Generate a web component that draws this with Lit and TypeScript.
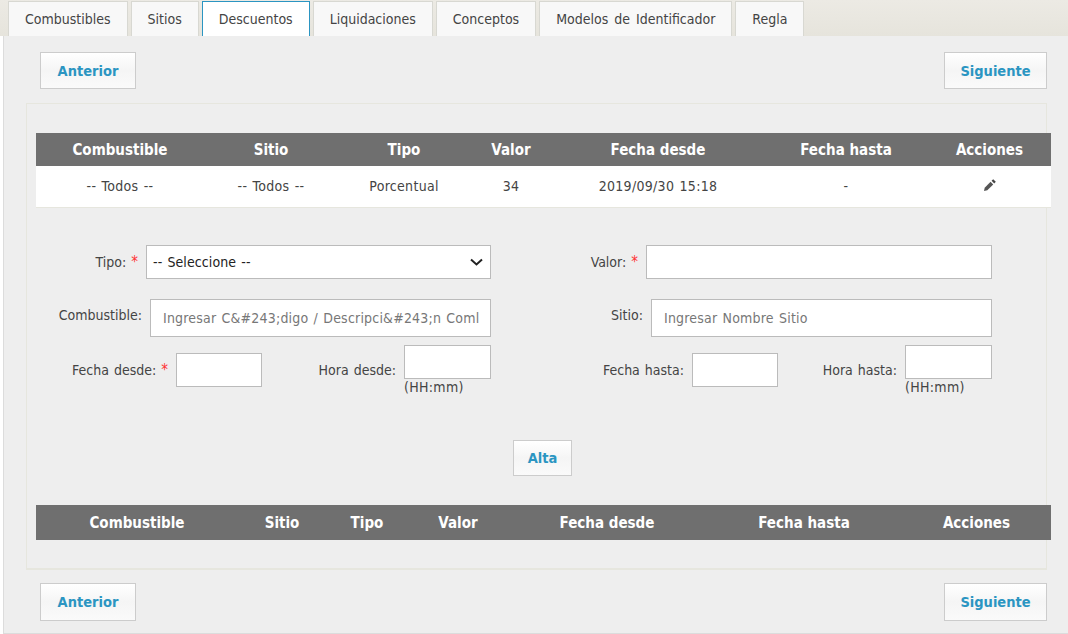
import { LitElement, html, css } from "lit";
import { customElement } from "lit/decorators.js";

const TABS = ["Combustibles", "Sitios", "Descuentos", "Liquidaciones", "Conceptos", "Modelos de Identificador", "Regla"];
const HEAD = ["Combustible", "Sitio", "Tipo", "Valor", "Fecha desde", "Fecha hasta", "Acciones"];
const W1 = [168, 134, 132, 82, 212, 164, 123];
const W2 = [202, 88, 82, 100, 198, 196, 149];
const ROW = ["-- Todos --", "-- Todos --", "Porcentual", "34", "2019/09/30 15:18", "-"];

@customElement("app-root")
export class AppRoot extends LitElement {
  static styles = css`
    :host { display: block; width: 1068px; height: 634px; overflow: hidden; background: #fff;
      font-family: "DejaVu Sans Condensed", "DejaVu Sans", sans-serif; font-stretch: condensed; font-size: 14px; color: #444; word-spacing: 1px; }
    * { box-sizing: border-box; }
    .tabs { display: flex; gap: 3px; height: 36px; padding: 1px 0 0 8px;
      background: linear-gradient(#eceae4, #e6e4dc); }
    .tab { height: 35px; padding: 0 16px; border: 1px solid #d8d8d2; border-bottom: 0; background: #f8f8f8;
      display: flex; align-items: center; font-size: 14px; color: #444; word-spacing: 2px; }
    .tab.on { background: #fff; border-color: #2b95c2; }
    .main { height: 598px; margin-left: 3px; background: #eee; border-left: 1px solid #dcdcdc; border-bottom: 1px solid #dcdcdc;
      padding: 16px 21px 0 22px; }
    .nav { display: flex; justify-content: space-between; padding: 0 0 0 14px; }
    .btn { height: 37px; border: 1px solid #ccc; font-weight: bold; font-size: 14.5px; color: #2b95c2;
      background: linear-gradient(#fff, #f5f5f5 50%, #fafafa); display: flex; align-items: center; justify-content: center; }
    .prev { width: 96px; }
    .next { width: 103px; }
    .panel { margin-top: 14px; height: 467px; border: 1px solid #e6e6de; border-bottom-width: 2px; padding: 29px 8px 0 9px; }
    table { border-collapse: collapse; table-layout: fixed; width: 1015px; word-spacing: 0; }
    th { background: #6f6f6f; color: #fff; font-weight: bold; font-size: 15px; text-align: center; padding: 0; }
    .t1 th { height: 33px; }
    .t2 th { height: 35px; padding-top: 1px; }
    td { background: #fff; height: 41px; text-align: center; padding: 0; font-size: 14px; letter-spacing: .3px; word-spacing: 1px; color: #444; border-bottom: 1px solid #e6e6de; }
    .pen { width: 14px; height: 14px; display: inline-block; vertical-align: -1px; }
    .form { display: grid; grid-template-columns: 455px 501px; margin-top: 37px; }
    .cell { display: flex; justify-content: flex-end; align-items: center; }
    .r1 { height: 34px; }
    .r2 { height: 38px; margin-top: 20px; }
    label { white-space: nowrap; }
    .req { color: #f33; font-size: 15px; line-height: 0; }
    .box { background: #fff; border: 1px solid #bbb; display: block; flex: none; }
    .sel { width: 345px; height: 34px; margin-left: 8px; padding: 1px 7px 0 6px; display: flex; align-items: center; justify-content: space-between; color: #222; letter-spacing: .1px; }
    .val { width: 346px; height: 34px; margin-left: 8px; }
    .txt { width: 341px; height: 38px; margin-left: 8px; padding: 1px 12px 0; display: flex; align-items: center; color: #777; white-space: nowrap; letter-spacing: .2px; }
    .r2 label { margin-top: -6px; }
    .r3 { display: grid; margin-top: 8px; height: 60px; }
    .r3.l { grid-template-columns: 1fr 229px; }
    .r3.d { grid-template-columns: 1fr 214px; }
    .dt { display: flex; justify-content: flex-end; align-items: center; height: 34px; margin-top: 8px; }
    .date { width: 86px; height: 34px; margin-left: 8px; }
    .hour { display: flex; justify-content: flex-end; align-items: flex-start; }
    .hour label { line-height: 34px; margin-top: 8px; }
    .hourcol { margin-left: 8px; width: 87px; }
    .time { width: 87px; height: 34px; }
    .hint { line-height: 16px; letter-spacing: .3px; }
    .altarow { margin-top: 35px; padding-left: 477px; display: flex; }
    .alta { width: 59px; height: 36px; }
    .t2 { margin-top: 29px; }
    .foot { margin-top: 13px; }
    .foot .btn { height: 38px; }
  `;

  private table(cls: string, w: number[], row: boolean) {
    return html`<table class=${cls}>
      <colgroup>${w.map((x) => html`<col style="width:${x}px" />`)}</colgroup>
      <thead><tr>${HEAD.map((h) => html`<th>${h}</th>`)}</tr></thead>
      ${row
        ? html`<tbody><tr>${ROW.map((c) => html`<td>${c}</td>`)}
            <td><svg class="pen" viewBox="0 0 14 14"><path d="M1 13l.7-3.3L7.6 3.8l2.6 2.6L4.3 12.3z" fill="#555"/><path d="M8.6 2.8l1.6-1.6 2.6 2.6-1.6 1.6z" fill="#444"/></svg></td></tr></tbody>`
        : ""}
    </table>`;
  }

  private nav(cls: string) {
    return html`<div class="nav ${cls}"><div class="btn prev">Anterior</div><div class="btn next">Siguiente</div></div>`;
  }

  private dates(cls: string, a: string, b: string, req: boolean) {
    return html`<div class="r3 ${cls}">
      <div class="dt"><label>${a}: ${req ? html`<span class="req">*</span>` : ""}</label><span class="box date"></span></div>
      <div class="hour"><label>${b}:</label><div class="hourcol"><span class="box time"></span><div class="hint">(HH:mm)</div></div></div>
    </div>`;
  }

  render() {
    return html`
      <div class="tabs">${TABS.map((t) => html`<div class="tab ${t === "Descuentos" ? "on" : ""}">${t}</div>`)}</div>
      <div class="main">
        ${this.nav("")}
        <div class="panel">
          ${this.table("t1", W1, true)}
          <div class="form">
            <div class="cell r1"><label>Tipo: <span class="req">*</span></label>
              <div class="box sel"><span>-- Seleccione --</span>
                <svg width="13" height="8" viewBox="0 0 13 8"><path d="M1 1.5l5.5 5 5.5-5" fill="none" stroke="#222" stroke-width="2"/></svg></div></div>
            <div class="cell r1"><label>Valor: <span class="req">*</span></label><span class="box val"></span></div>
            <div class="cell r2"><label>Combustible:</label><div class="box txt">Ingresar C&amp;#243;digo / Descripci&amp;#243;n Coml</div></div>
            <div class="cell r2"><label>Sitio:</label><div class="box txt">Ingresar Nombre Sitio</div></div>
            ${this.dates("l", "Fecha desde", "Hora desde", true)}
            ${this.dates("d", "Fecha hasta", "Hora hasta", false)}
          </div>
          <div class="altarow"><div class="btn alta">Alta</div></div>
          ${this.table("t2", W2, false)}
        </div>
        ${this.nav("foot")}
      </div>
    `;
  }
}
